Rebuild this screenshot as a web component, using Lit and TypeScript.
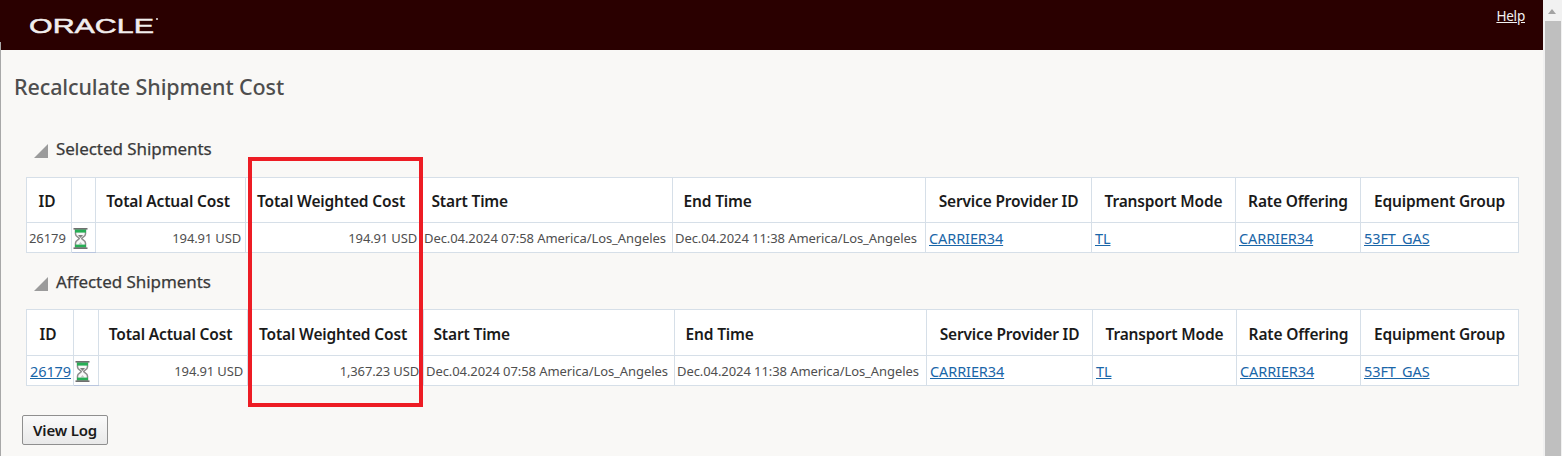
import { LitElement, html, css, svg } from "lit";
import { customElement } from "lit/decorators.js";

const hourglass = svg`<svg class="hg" width="15" height="23" viewBox="0 0 15 23">
  <path d="M2.5 3 L2.5 7 C2.5 9.5 6 10.2 6.3 11.5 C6 12.8 2.5 13.5 2.5 16 L2.5 20 L12.5 20 L12.5 16 C12.5 13.5 9 12.8 8.7 11.5 C9 10.2 12.5 9.5 12.5 7 L12.5 3 Z" fill="#f8f8f8" stroke="#8d8d8d" stroke-width="1.5"/>
  <path d="M5 8 L10 8 L7.5 11 Z" fill="#7d7d7d"/>
  <path d="M5.5 17.5 L9.5 17.5 L7.5 15 Z" fill="#c2c2c2"/>
  <rect x="0.5" y="1" width="14" height="1.6" fill="#6f6f6f"/>
  <rect x="2" y="2.6" width="11" height="3" fill="#27ae55"/>
  <rect x="2" y="17.6" width="11" height="2.8" fill="#27ae55"/>
  <rect x="0.5" y="20.4" width="14" height="1.6" fill="#6f6f6f"/>
</svg>`;

const heads = ["ID", "", "Total Actual Cost", "Total Weighted Cost", "Start Time", "End Time", "Service Provider ID", "Transport Mode", "Rate Offering", "Equipment Group"];
const headCls = ["idh", "", "shift", "shift", "start", "end", "", "", "", ""];

interface Tbl { title: string; idLink: boolean; widths: number[]; weighted: string; cls: string; }
const tables: Tbl[] = [
  { title: "Selected Shipments", idLink: false, widths: [45, 24, 150, 176, 251, 253, 166, 144, 125, 158], weighted: "194.91 USD", cls: "t1" },
  { title: "Affected Shipments", idLink: true, widths: [47, 25, 149, 176, 251, 252, 166, 144, 124, 158], weighted: "1,367.23 USD", cls: "t2" },
];

@customElement("app-root")
export class AppRoot extends LitElement {
  static styles = css`
    :host { display: block; width: 1562px; height: 456px; overflow: hidden; position: relative; background: #f9f8f6;
      font-family: "Noto Sans", "Open Sans", sans-serif; color: #4a4a4a; }
    * { box-sizing: border-box; }
    .shell { display: flex; height: 456px; }
    .main { flex: 1; min-width: 0; }
    .bar { height: 50px; background: #2a0000; display: flex; justify-content: space-between; align-items: flex-start; padding: 0 18px 0 30px; }
    .logo { display: block; margin-top: 15px; overflow: visible; }
    .help { color: #f2f2f2; font-size: 13.5px; line-height: 18px; margin-top: 7px; text-decoration: underline; letter-spacing: -.2px; }
    .content { padding: 0 25px 0 0; }
    h1 { margin: 0; padding: 22px 0 0 14px; height: 76px; font-size: 21.5px; line-height: 30px; font-weight: 500; color: #4e4e4e; letter-spacing: -.11px; }
    .sec { display: flex; align-items: center; gap: 8px; height: 28px; padding-left: 34px; font-size: 17px; font-weight: 400; color: #3a3a3a; letter-spacing: -.05px; -webkit-text-stroke: .25px #3a3a3a; }
    .sec span { margin-top: -2px; }
    .tri { margin-top: 3px; flex: none; }
    .s1 { margin-top: 9px; }
    .s2 { margin-top: 15px; }
    table { border-collapse: collapse; table-layout: fixed; width: 1492px; margin-left: 26px; background: #fff; }
    .t1 { margin-top: 14px; }
    .t2 { margin-top: 13px; }
    th, td { border: 1px solid #d6dfe8; padding: 0; white-space: nowrap; overflow: hidden; }
    th { height: 45px; padding-top: 1px; font-size: 15.5px; font-weight: 600; color: #1a1a1a; text-align: center; letter-spacing: -.16px; }
    th.idh { padding-right: 4px; }
    th.shift { padding-right: 5px; }
    th.start { text-align: left; padding-left: 9.5px; }
    th.end { text-align: left; padding-left: 10.5px; }
    .t2 th { height: 46px; padding-top: 3px; }
    td { height: 30px; font-size: 13px; color: #4f4f4f; padding: 0 2px; letter-spacing: -.08px; }
    td.num { text-align: right; padding-right: 4px; letter-spacing: -.15px; }
    td.hgc { padding: 0; border-bottom-color: #b9c6df; }
    .hg { display: block; margin: 2px 0 0 1px; }
    a { color: #1a66a8; text-decoration: underline; font-size: 14.5px; letter-spacing: -.1px; margin-left: 1px; }
    .btn { margin: 29px 0 0 22px; height: 30px; width: 86px; display: block; border: 1px solid #8f8f8f; border-radius: 2px;
      background: linear-gradient(#fafafa, #e9e9e9); font: 600 15px "Noto Sans", sans-serif; color: #1a1a1a; letter-spacing: -.2px; padding: 0; }
    .sb { width: 19px; flex: none; background: #f1f1f1; padding: 21px 1px 0 2px; position: relative; }
    .thumb { background: #bfbfbf; height: 100%; }
    .up { position: absolute; left: 5px; top: 9px; width: 0; height: 0; border-left: 4px solid transparent; border-right: 4px solid transparent; border-bottom: 5px solid #a3a3a3; }
    .edge { position: absolute; left: 0; top: 42px; width: 1px; bottom: 0; background: #a8a8a8; }
    .mark { position: absolute; left: 248px; top: 157px; width: 175px; height: 250px; border: 4px solid #ed1c24; pointer-events: none; }
  `;

  private table(t: Tbl) {
    return html`<table class=${t.cls}>
      <colgroup>${t.widths.map((w) => html`<col style="width:${w}px" />`)}</colgroup>
      <thead><tr>${heads.map((h, i) => html`<th class=${headCls[i]}>${h}</th>`)}</tr></thead>
      <tbody><tr>
        <td>${t.idLink ? html`<a href="#">26179</a>` : "26179"}</td>
        <td class="hgc">${hourglass}</td>
        <td class="num">194.91 USD</td>
        <td class="num">${t.weighted}</td>
        <td>Dec.04.2024 07:58 America/Los_Angeles</td>
        <td>Dec.04.2024 11:38 America/Los_Angeles</td>
        <td><a href="#">CARRIER34</a></td>
        <td><a href="#">TL</a></td>
        <td><a href="#">CARRIER34</a></td>
        <td><a href="#">53FT_GAS</a></td>
      </tr></tbody>
    </table>`;
  }

  private tri() {
    return html`<svg class="tri" width="14" height="14" viewBox="0 0 14 14"><path d="M0 14 L14 0 L14 14 Z" fill="#9b9b9b"/></svg>`;
  }

  render() {
    return html`<div class="shell">
      <div class="main">
        <header class="bar">
          <svg class="logo" width="130" height="20" viewBox="0 0 130 20">
            <text x="-1" y="18" textLength="125" lengthAdjust="spacingAndGlyphs" font-family="Liberation Sans" font-size="21" fill="#f1eeee" stroke="#f1eeee" stroke-width=".5">ORACLE</text>
            <circle cx="127" cy="4" r="1.1" fill="#d9d0d0"/>
          </svg>
          <a class="help" href="#">Help</a>
        </header>
        <div class="content">
          <h1>Recalculate Shipment Cost</h1>
          <div class="sec s1">${this.tri()}<span>${tables[0].title}</span></div>
          ${this.table(tables[0])}
          <div class="sec s2">${this.tri()}<span>${tables[1].title}</span></div>
          ${this.table(tables[1])}
          <button class="btn">View Log</button>
        </div>
      </div>
      <div class="sb"><div class="up"></div><div class="thumb"></div></div>
    </div>
    <div class="edge"></div>
    <div class="mark"></div>`;
  }
}
